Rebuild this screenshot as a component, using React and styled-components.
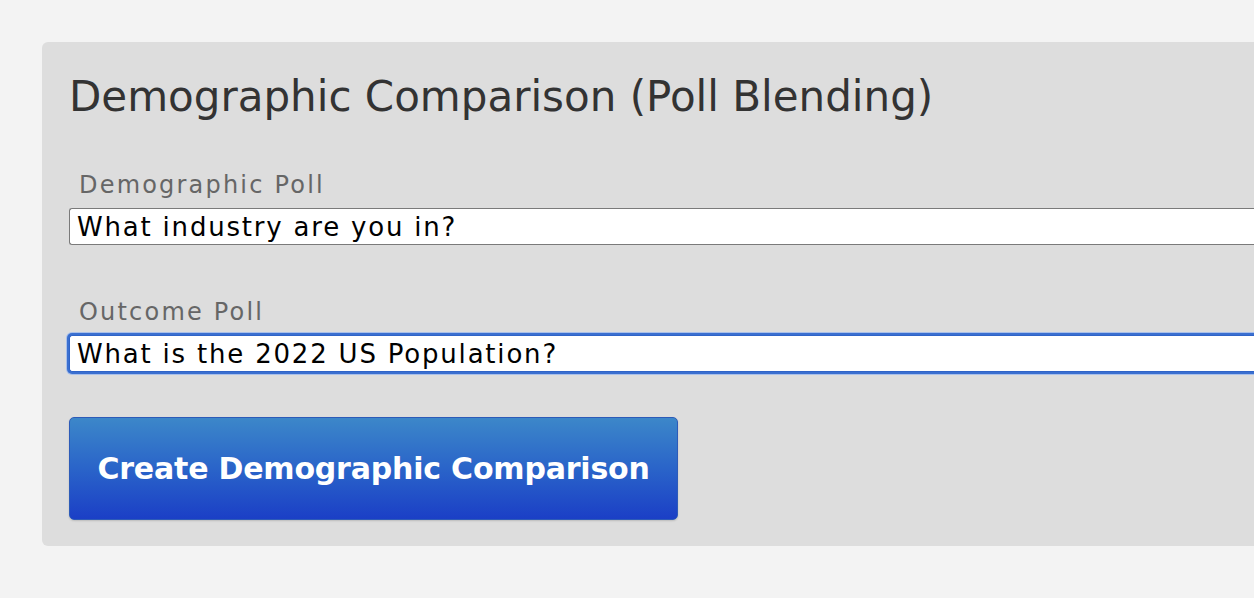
import React, { useEffect, useRef } from "react"
import styled, { createGlobalStyle } from "styled-components"

const GlobalStyle = createGlobalStyle`
  html, body {
    margin: 0;
    background: #f3f3f3;
    overflow: hidden;
  }
  body {
    font-family: "DejaVu Sans", "Liberation Sans", sans-serif;
  }
`

const Page = styled.div`
  padding: 42px 0 0 42px;
  width: 1254px;
  height: 598px;
  box-sizing: border-box;
  overflow: hidden;
`

const Panel = styled.div`
  background: #dddddd;
  border-radius: 6px 0 0 6px;
  padding: 27px 0 26px 27px;
  width: 100%;
  box-sizing: border-box;
`

const Title = styled.h1`
  margin: 0 0 46px 0;
  font-size: 42px;
  font-weight: normal;
  color: #333;
  line-height: 56px;
`

const Field = styled.div`
  display: flex;
  flex-direction: column;
  margin-bottom: ${p => p.gap || 0}px;
`

const Label = styled.label`
  font-size: 24px;
  letter-spacing: 2.2px;
  color: #666;
  padding-left: 10px;
  line-height: 28px;
  margin-bottom: 9px;
`

const Input = styled.input`
  font-family: "DejaVu Sans", "Liberation Sans", sans-serif;
  font-size: 26px;
  letter-spacing: 1.8px;
  color: #000;
  height: 37px;
  box-sizing: border-box;
  border: 1px solid ${p => (p.focused ? "#2f64c8" : "#7a7a7a")};
  border-right: none;
  box-shadow: ${p => (p.focused ? "0 0 0 2px #3a6fd0, 0 0 0 3px #a9c0ea" : "none")};
  border-radius: 3px 0 0 3px;
  padding: 0 7px;
  background: #fff;
  outline: none;
  width: 100%;
`

const Button = styled.button`
  align-self: flex-start;
  margin-top: 45px;
  width: 609px;
  height: 103px;
  border: 1px solid #2d5bb8;
  border-radius: 5px;
  background: linear-gradient(to bottom, #3c87c9 0%, #2a64c9 50%, #1b3fc6 100%);
  color: #fff;
  font-family: "DejaVu Sans", "Liberation Sans", sans-serif;
  font-weight: bold;
  font-size: 30px;
  letter-spacing: -0.2px;
  box-shadow: 0 1px 2px rgba(0, 0, 0, 0.15);
  cursor: pointer;
`

const Form = styled.div`
  display: flex;
  flex-direction: column;
`

const App = () => {
  const outcomeRef = useRef(null)

  useEffect(() => {
    if (outcomeRef.current) outcomeRef.current.focus({ preventScroll: true })
  }, [])

  return (
    <Page>
      <GlobalStyle />
      <Panel>
        <Title>Demographic Comparison (Poll Blending)</Title>
        <Form>
          <Field gap={53}>
            <Label>Demographic Poll</Label>
            <Input defaultValue="What industry are you in?" />
          </Field>
          <Field>
            <Label>Outcome Poll</Label>
            <Input focused ref={outcomeRef} defaultValue="What is the 2022 US Population?" />
          </Field>
          <Button>Create Demographic Comparison</Button>
        </Form>
      </Panel>
    </Page>
  )
}

export default App
